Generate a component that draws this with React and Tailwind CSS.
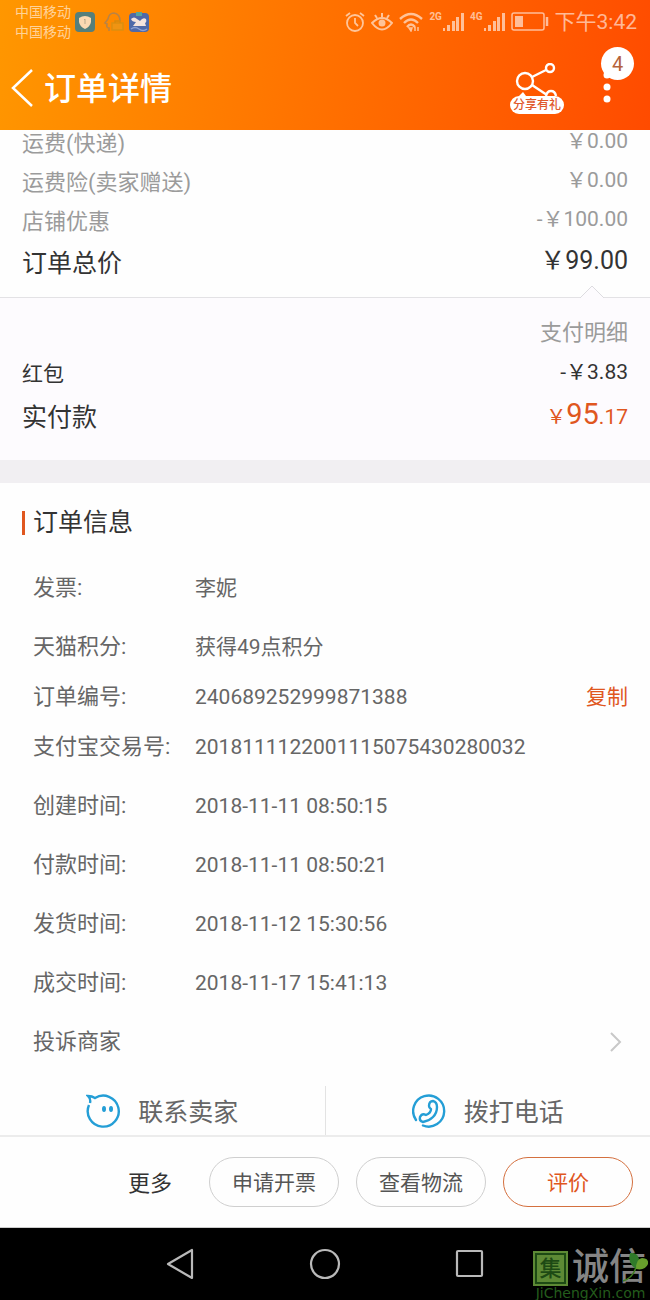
const FEES = [
  { label: "运费(快递)", value: "￥0.00" },
  { label: "运费险(卖家赠送)", value: "￥0.00" },
  { label: "店铺优惠", value: "-￥100.00" },
];

// rows in one group sit closer together
const INFO_GROUPS = [
  [{ label: "发票", value: "李妮" }],
  [
    { label: "天猫积分", value: "获得49点积分" },
    { label: "订单编号", value: "240689252999871388", copy: true },
    { label: "支付宝交易号", value: "2018111122001115075430280032" },
  ],
  [{ label: "创建时间", value: "2018-11-11 08:50:15" }],
  [{ label: "付款时间", value: "2018-11-11 08:50:21" }],
  [{ label: "发货时间", value: "2018-11-12 15:30:56" }],
  [{ label: "成交时间", value: "2018-11-17 15:41:13" }],
];

function Signal({ label }) {
  return (
    <span className="flex gap-px h-5">
      <span className="text-[10px] leading-[10px] font-bold">{label}</span>
      <svg className="w-[21px] h-5" viewBox="0 0 21 20" fill="currentColor">
        <rect x="0" y="16" width="2" height="3" />
        <rect x="4" y="13" width="3" height="6" />
        <rect x="9" y="9" width="3" height="10" />
        <rect x="13" y="5" width="3" height="14" />
        <rect x="18" y="1" width="3" height="18" />
      </svg>
    </span>
  );
}

function StatusBar() {
  return (
    <div className="h-11 pl-[15px] pr-[13px] flex items-center justify-between text-white/60">
      <div className="flex items-center gap-1">
        <div className="text-[14px] leading-5">
          <div>中国移动</div>
          <div>中国移动</div>
        </div>
        <svg className="w-5 h-5" viewBox="0 0 20 20">
          <rect width="20" height="20" rx="4" fill="#557f7b" />
          <path d="M4 6 Q10 2 16 6 V10 Q15 15 10 17 Q5 15 4 10Z" fill="#fbd9b2" />
          <path d="M10 7 V12 M9 8 L10 7" stroke="#b9a98a" strokeWidth="1" fill="none" />
        </svg>
        <svg className="w-[22px] h-5 ml-1" viewBox="0 0 22 20" fill="none">
          <path
            d="M6 19 V16 Q3 16 4 12 L2 11 L5 7 Q6 1 11 1 Q17 2 17 9"
            stroke="#b98345"
            strokeWidth="1.6"
          />
          <rect x="9" y="11" width="11" height="7" fill="#f09412" stroke="#dc8f10" strokeWidth="1.5" />
          <path d="M12 11 V9 H17 V11" stroke="#d98a0c" strokeWidth="1.5" />
        </svg>
        <svg className="w-5 h-5" viewBox="0 0 20 20">
          <rect y="1" width="20" height="19" rx="4" fill="#4f69a8" />
          <path d="M7 0 H13 V4 H7Z" fill="#58a59c" />
          <path d="M2 7 Q5 4 8 7 L11 9 Q14 5 17 7 Q18 10 16 11 L17 14 H4 L7 10 Q3 10 2 7Z" fill="#f4e3dc" />
          <path d="M2 17 Q6 14 10 17 T18 17" stroke="#8ea1d4" strokeWidth="1.5" fill="none" />
        </svg>
      </div>
      <div className="flex items-center gap-[6px]">
        <svg className="w-5 h-5" viewBox="0 0 20 20" fill="none" stroke="currentColor" strokeWidth="1.8">
          <circle cx="10" cy="11" r="8" />
          <path d="M10 6 V11 L13 14 M1 4 L5 1 M19 4 L15 1" />
        </svg>
        <svg className="w-[22px] h-5" viewBox="0 0 22 20" fill="none" stroke="currentColor" strokeWidth="2">
          <path d="M1 11 Q11 1 21 11 Q11 24 1 11Z M11 1 V5 M4 3 L6 6 M18 3 L16 6" />
          <circle cx="11" cy="11" r="3.5" fill="currentColor" stroke="none" />
        </svg>
        <svg className="w-6 h-5" viewBox="0 0 24 20" fill="none" stroke="currentColor" strokeWidth="2.4">
          <path d="M1 7 Q12 -3 23 7 M5 11 Q12 4 19 11 M8 15 Q12 10 16 15" />
          <path d="M10 16 H13 L12 19Z M16 19 V15 M19 15 V19" strokeWidth="1.5" />
        </svg>
        <Signal label="2G" />
        <Signal label="4G" />
        <svg className="w-[38px] h-5" viewBox="0 0 38 20" fill="none" stroke="currentColor">
          <rect x="1" y="1" width="32" height="17" rx="2" strokeWidth="1.5" />
          <rect x="4" y="4" width="8" height="11" fill="currentColor" stroke="none" />
          <path d="M36 5 V14" strokeWidth="2.5" />
        </svg>
        <span className="text-[21px] leading-5">下午3:42</span>
      </div>
    </div>
  );
}

function Header() {
  return (
    <header className="relative z-10 h-[130px] bg-[linear-gradient(100deg,#ff9700,#ff4b00)] text-white">
      <StatusBar />
      <div className="h-[88px] pl-[11px] pr-4 flex items-center">
        <button aria-label="返回" className="mr-[11px]">
          <svg className="w-[22px] h-10" viewBox="0 0 22 40" fill="none" stroke="currentColor" strokeWidth="2.5">
            <path d="M21 2 L2 20 L21 38" />
          </svg>
        </button>
        <h1 className="pt-[2px] text-[32px] leading-10 font-medium">订单详情</h1>
        <button className="ml-auto w-[54px] flex flex-col">
          <svg className="w-[54px] h-[33px]" viewBox="0 0 54 33" fill="none" stroke="currentColor" strokeWidth="2.4">
            <circle cx="15" cy="18" r="8" />
            <circle cx="40" cy="5" r="4" />
            <path d="M22 14 L36 7 M22 22 L37 32 M36 33 Q37 28 41 28 Q45 28 46 33" />
            <path d="M9 33 L13 29 L16 33Z" fill="currentColor" stroke="none" />
          </svg>
          <span className="w-full h-[18px] rounded-full bg-white text-[12px] leading-[18px] font-medium text-[#e0592b] text-center">
            分享有礼
          </span>
        </button>
        <button aria-label="更多消息" className="relative ml-[27px]">
          <svg className="w-[43px] h-[50px]" viewBox="0 0 43 50" fill="currentColor">
            <circle cx="16" cy="12" r="3.5" />
            <circle cx="16" cy="24" r="3.5" />
            <circle cx="16" cy="36" r="3.5" />
          </svg>
          <span className="absolute -top-4 right-0 size-[33px] rounded-full bg-white text-[20px] leading-[34px] text-[#b5633a] text-center">
            4
          </span>
        </button>
      </div>
    </header>
  );
}

function Fees() {
  return (
    <section className="-mt-[5px] px-[22px] bg-[#fefefe]">
      {FEES.map((f) => (
        <div key={f.label} className="h-[39px] flex justify-between text-[#9b9b9b]">
          <span className="text-[22px] leading-[37px]">{f.label}</span>
          <span className="text-[21px] leading-[33px]">{f.value}</span>
        </div>
      ))}
      <div className="h-[55px] flex justify-between text-[25px] text-[#333]">
        <span className="leading-[43px]">订单总价</span>
        <span className="leading-[37px]">￥99.00</span>
      </div>
    </section>
  );
}

function Payment() {
  return (
    <section className="relative h-[163px] px-[22px] pt-[14px] bg-[#fdfbfe] border-t border-[#e3e2e5]">
      <svg className="absolute right-[46px] -top-[13px] w-6 h-[14px]" viewBox="0 0 24 14">
        <path d="M0 13 L12 1 L24 13 V14 H0Z" fill="#fdfbfe" />
        <path d="M0 13 L12 1 L24 13" fill="none" stroke="#dddce0" />
      </svg>
      <div className="text-[22px] leading-[42px] text-right text-[#9b9b9b]">支付明细</div>
      <div className="h-[42px] flex justify-between text-[21px] text-[#333]">
        <span className="leading-[40px]">红包</span>
        <span className="leading-[36px]">-￥3.83</span>
      </div>
      <div className="h-[42px] flex justify-between text-[25px] text-[#333]">
        <span className="leading-[43px]">实付款</span>
        <span className="leading-[37px] text-[#e0571f]">
          <span className="text-[20px]">￥</span>
          <span className="text-[29px]">95</span>
          <span className="text-[21px]">.17</span>
        </span>
      </div>
    </section>
  );
}

function OrderInfo() {
  return (
    <section className="pt-5 px-[22px] bg-[#fefefe] text-[#666]">
      <h2 className="flex items-center gap-2 text-[25px] leading-10 text-[#333]">
        <span className="w-[3px] h-6 bg-[#e0571f]" />
        订单信息
      </h2>
      <div className="mt-[29px] pl-[11px] flex flex-col gap-[27px]">
        {INFO_GROUPS.map((rows) => (
          <dl key={rows[0].label} className="flex flex-col gap-[18px]">
            {rows.map((r) => (
              <div key={r.label} className="flex leading-8">
                <dt className="w-[162px] text-[22px]">{r.label}:</dt>
                <dd className="flex-1 flex justify-between text-[21px]">
                  {r.value}
                  {r.copy && <button className="text-[#e0571f]">复制</button>}
                </dd>
              </div>
            ))}
          </dl>
        ))}
        <button className="flex items-center justify-between pr-[6px] text-[22px] leading-8">
          投诉商家
          <svg className="w-3 h-5" viewBox="0 0 12 20" fill="none" stroke="#c8c8c8" strokeWidth="2">
            <path d="M1 1 L10 10 L1 19" />
          </svg>
        </button>
      </div>
    </section>
  );
}

function Contact() {
  return (
    <section className="pt-7 flex bg-[#fefefe] text-[25px] text-[#666] border-b-2 border-[#ececec]">
      <button className="flex-1 h-[49px] flex items-center justify-center gap-[18px] border-r border-[#e3e3e3]">
        <svg className="w-[34px] h-[34px]" viewBox="0 0 34 34" fill="none" stroke="#249ed6" strokeWidth="2.4">
          <path d="M3 11 A15.5 15.5 0 1 0 9 4 Q6 2 2 2 Q5 5 4 9" />
          <ellipse cx="18" cy="15" rx="2" ry="3" fill="#249ed6" stroke="none" />
          <ellipse cx="25" cy="15" rx="2" ry="3" fill="#249ed6" stroke="none" />
        </svg>
        <span className="pt-1">联系卖家</span>
      </button>
      <button className="flex-1 h-[49px] flex items-center justify-center gap-[18px]">
        <svg
          className="w-[34px] h-[34px]"
          viewBox="0 0 34 34"
          fill="none"
          stroke="#249ed6"
          strokeWidth="2.4"
          strokeLinecap="round"
          strokeLinejoin="round"
        >
          <path d="M4 26 A15.5 15.5 0 1 1 11 31.5" />
          <path d="M17 12 Q17 7 21 7 Q25 8 25 13 Q25 19 21 23 Q17 27 11 28 Q7 27 8 23 Q10 19 14 21 Q19 19 19 15 Q17 14 17 12Z" />
        </svg>
        <span className="pt-1">拨打电话</span>
      </button>
    </section>
  );
}

function PillBtn({ primary, children }) {
  return (
    <button
      className={`w-[130px] h-[50px] pt-[3px] rounded-full border text-[21px] ${
        primary ? "border-[#d4703f] text-[#e0571f]" : "border-[#cfcfcf] text-[#555]"
      }`}
    >
      {children}
    </button>
  );
}

function Actions() {
  return (
    <footer className="h-[91px] pr-[17px] flex items-center justify-end gap-[17px] bg-[#fefefe] border-b border-[#ccc]">
      <button className="mr-5 pt-[2px] text-[22px] text-[#333]">更多</button>
      <PillBtn>申请开票</PillBtn>
      <PillBtn>查看物流</PillBtn>
      <PillBtn primary>评价</PillBtn>
    </footer>
  );
}

function Watermark() {
  return (
    <div className="absolute right-0 bottom-0 w-[119px] text-[#858585]">
      <div className="flex items-center gap-1">
        <span className="ml-[2px] size-[35px] border-2 border-[#5d8a35] outline-2 -outline-offset-4 outline-[#1d4a14] bg-[#5d8a35] text-[22px] leading-[31px] font-medium text-[#1d4a14] text-center">
          集
        </span>
        <span className="text-[37px] leading-9 font-medium whitespace-nowrap">诚信</span>
      </div>
      <div className="[font-family:'DejaVu_Sans',sans-serif] text-[14px] leading-[14px] text-center text-[#245c1c]">
        JiChengXin.com
      </div>
      <svg className="absolute right-0 top-0 w-7 h-8" viewBox="0 0 28 32">
        <path d="M1 31 Q11 28 14 17" fill="none" stroke="#3f7d22" strokeWidth="1.5" />
        <path d="M14 19 Q5 13 8 3 Q17 2 17 11Z" fill="#2f7a2a" />
        <path d="M14 19 Q14 9 20 8 Q27 8 26 14 Q23 21 14 19Z" fill="#679f2c" />
      </svg>
    </div>
  );
}

function NavBar() {
  return (
    <nav className="relative h-[72px] flex items-center justify-center bg-black text-[#b9b9b9]">
      <button aria-label="后退" className="w-[145px] flex justify-center">
        <svg className="size-8" viewBox="0 0 32 32" fill="none" stroke="currentColor" strokeWidth="2.2" strokeLinejoin="round">
          <path d="M4 16 L28 2 V30Z" />
        </svg>
      </button>
      <button aria-label="主页" className="w-[145px] flex justify-center">
        <svg className="size-8" viewBox="0 0 32 32" fill="none" stroke="currentColor" strokeWidth="2.2">
          <circle cx="16" cy="16" r="14" />
        </svg>
      </button>
      <button aria-label="最近任务" className="w-[145px] flex justify-center">
        <svg className="size-8" viewBox="0 0 32 32" fill="none" stroke="currentColor" strokeWidth="2.2">
          <rect x="3" y="3" width="25" height="25" rx="1" />
        </svg>
      </button>
      <Watermark />
    </nav>
  );
}

export default function App() {
  return (
    <div className="[font-family:Roboto,'Noto_Sans_CJK_SC',sans-serif]">
      <Header />
      <main>
        <Fees />
        <Payment />
        <div className="h-[23px] bg-[#f1eff2]" />
        <OrderInfo />
        <Contact />
      </main>
      <Actions />
      <NavBar />
    </div>
  );
}
